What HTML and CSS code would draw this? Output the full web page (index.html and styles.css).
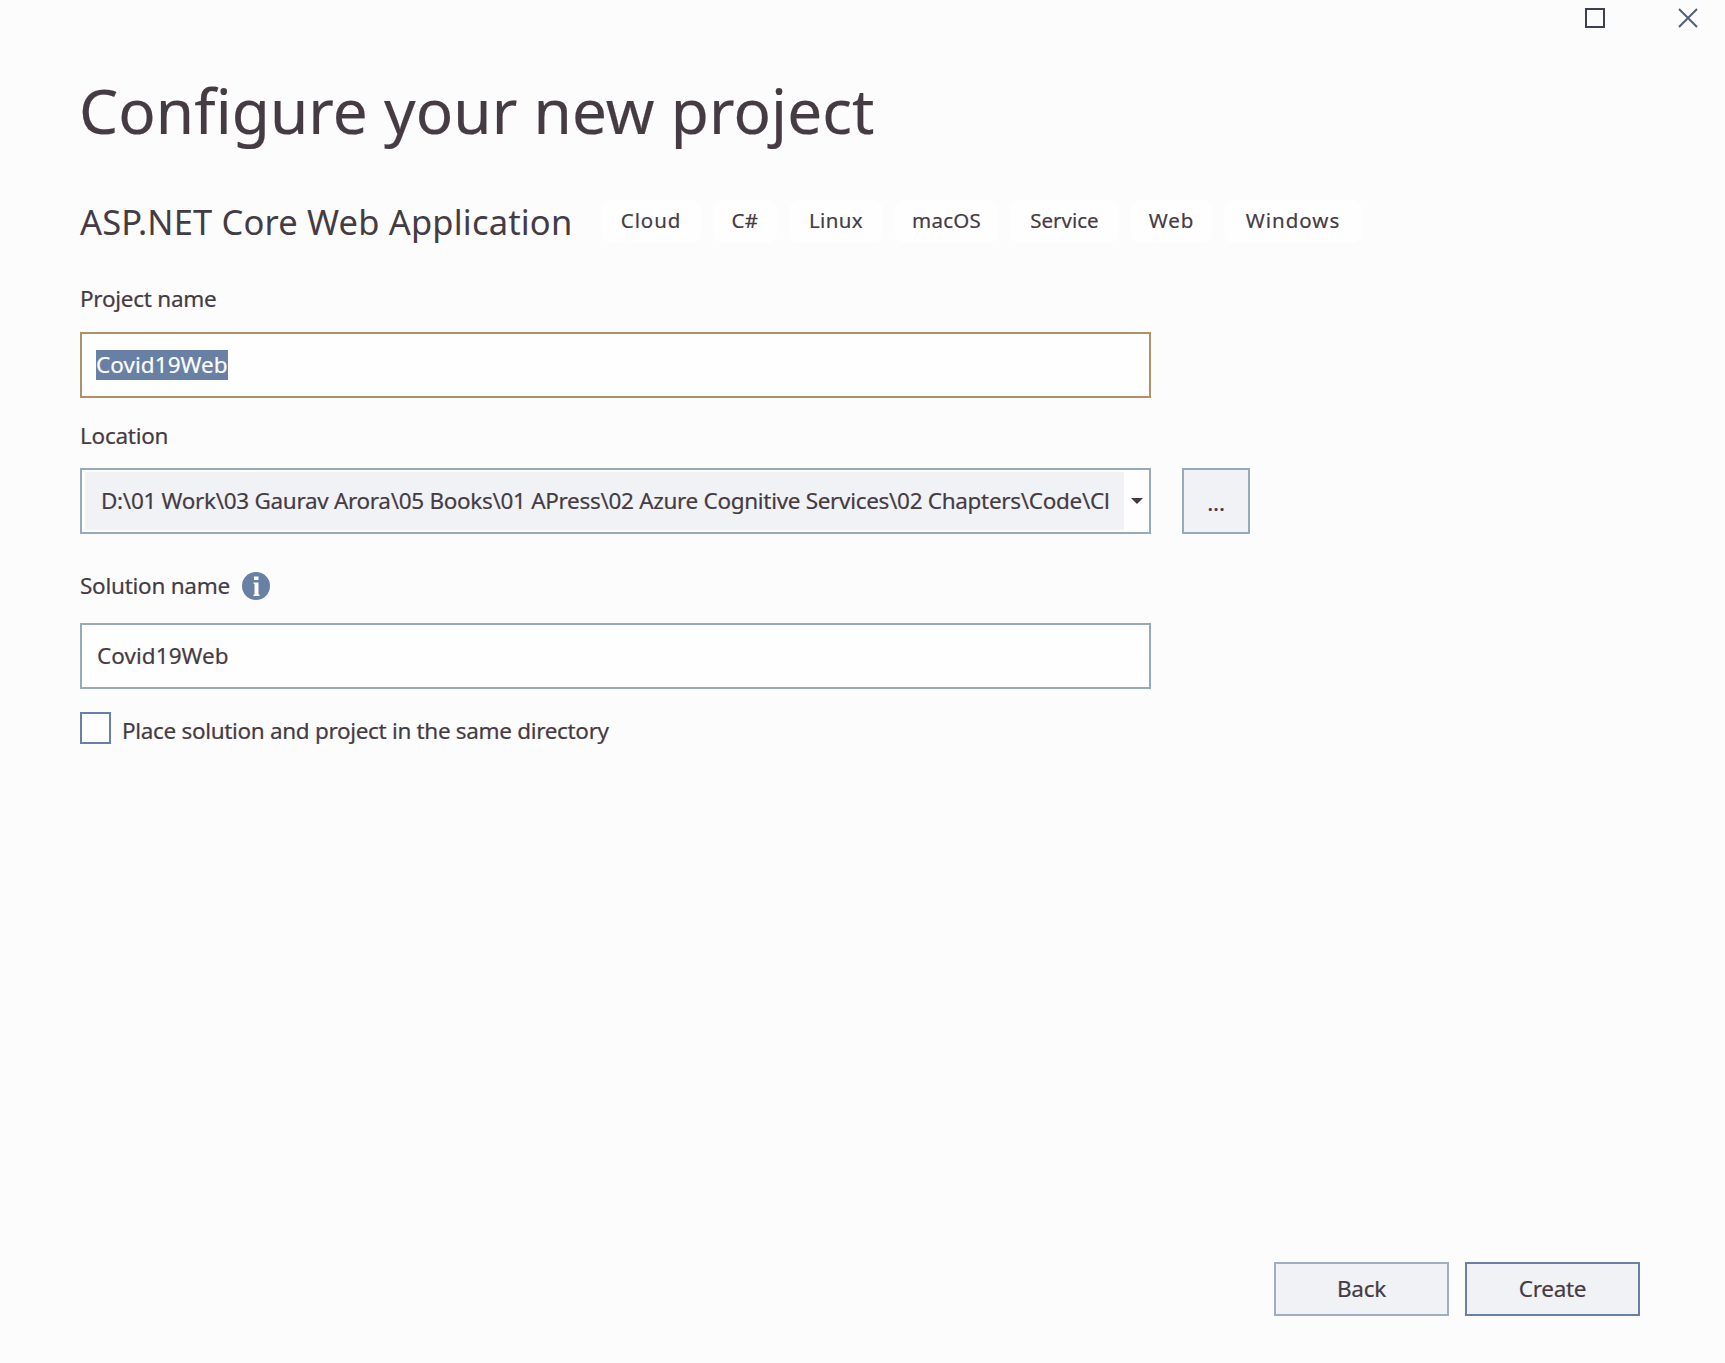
FILE: index.html
```
<!DOCTYPE html>
<html lang="en">
<head>
<meta charset="utf-8">
<title>Configure your new project</title>
<link rel="stylesheet" href="styles.css">
</head>
<body>
<div class="window">
  <header class="titlebar">
    <svg class="win-icon" width="22" height="22" viewBox="0 0 22 22"><rect x="2" y="2" width="18" height="18" fill="none" stroke="#3d4050" stroke-width="2"/></svg>
    <svg class="win-icon" width="22" height="22" viewBox="0 0 22 22"><path d="M2 2 20 20M20 2 2 20" fill="none" stroke="#4f5f7d" stroke-width="2"/></svg>
  </header>
  <main class="content">
    <h1 class="title">Configure your new project</h1>
    <div class="template">
      <h2 class="template-name">ASP.NET Core Web Application</h2>
      <ul class="tags">
        <li class="tag tag-cloud">Cloud</li>
        <li class="tag tag-csharp">C#</li>
        <li class="tag tag-linux">Linux</li>
        <li class="tag tag-macos">macOS</li>
        <li class="tag tag-service">Service</li>
        <li class="tag tag-web">Web</li>
        <li class="tag tag-windows">Windows</li>
      </ul>
    </div>
    <div class="label label-project">Project name</div>
    <div class="field field-focus"><span class="value selection">Covid19Web</span></div>
    <div class="label label-location">Location</div>
    <div class="location-row">
      <div class="field combo">
        <div class="combo-value">D:\01 Work\03 Gaurav Arora\05 Books\01 APress\02 Azure Cognitive Services\02 Chapters\Code\Cl</div>
        <svg class="combo-arrow" width="12" height="6" viewBox="0 0 12 6"><path d="M0 0H12L6 6Z" fill="#43393f"/></svg>
      </div>
      <div class="browse">...</div>
    </div>
    <div class="label label-solution">Solution name
      <svg class="info" width="28" height="28" viewBox="0 0 28 28"><circle cx="14" cy="14" r="14" fill="#6880a3"/><path d="M12 4.500h4.500v3.500h-4.500zM11.500 10.500h5V22.500h1V24H11.500V22.500H12.500V12H11.500z" fill="#fdfdfd"/></svg>
    </div>
    <div class="field"><span class="value">Covid19Web</span></div>
    <div class="check-row"><div class="checkbox"></div><span class="check-label">Place solution and project in the same directory</span></div>
  </main>
  <footer class="actions">
    <div class="button">Back</div>
    <div class="button button-primary">Create</div>
  </footer>
</div>
</body>
</html>
```
FILE: styles.css
```
* { box-sizing: border-box; }
body {
  margin: 0;
  background: #fcfcfc;
  color: #453b43;
  font-family: "Noto Sans", "Open Sans", sans-serif;
  font-size: 22.5px;
  letter-spacing: -0.26px;
  -webkit-text-stroke: 0.2px;
}
.window { width: 1725px; height: 1363px; display: flex; flex-direction: column; }
.titlebar { height: 67px; padding: 7px 26px 0 0; display: flex; justify-content: flex-end; gap: 71px; }
.content { flex: 1; padding-left: 80px; display: flex; flex-direction: column; }
.title { margin: 0 0 0 -1px; font-size: 62px; font-weight: 400; line-height: 86px; letter-spacing: 0.08px; white-space: nowrap; }
.template { margin-top: 47px; height: 43px; display: flex; align-items: center; }
.template-name { margin: 0; width: 521px; font-size: 34.5px; font-weight: 400; line-height: 42px; letter-spacing: 0.17px; white-space: nowrap; -webkit-text-stroke: 0; }
.tags { display: flex; gap: 12px; margin: 0; padding: 0; list-style: none; }
.tag { height: 43px; border-radius: 10px; background: #fefefe; font-size: 20.5px; line-height: 40px; letter-spacing: 0.3px; text-align: center; white-space: nowrap; }
.tag-cloud { width: 100px; letter-spacing: 0.9px; }
.tag-csharp { width: 64px; }
.tag-linux { width: 94px; letter-spacing: 0.4px; }
.tag-macos { width: 103px; letter-spacing: 0.2px; }
.tag-service { width: 109px; letter-spacing: 0; }
.tag-web { width: 81px; letter-spacing: 0.9px; }
.tag-windows { width: 138px; letter-spacing: 1px; }
.label { height: 30px; line-height: 30px; display: flex; align-items: center; }
.label-project { margin: 41px 0 18px; }
.label-location { margin: 23px 0 17px; }
.label-solution { margin: 37px 0 22px; }
.info { margin: 0 0 0 12px; }
.field { width: 1071px; height: 66px; padding: 0 0 1px 15px; border: 2px solid #9aa8bb; background: #fefefe; display: flex; align-items: center; }
.field-focus { padding-left: 14px; border-color: #b09068; }
.value { letter-spacing: 0.05px; line-height: 30px; }
.selection { background: #6880a3; color: #fdfdfd; }
.location-row { display: flex; gap: 31px; }
.combo { padding: 2px 6px 2px 3px; justify-content: space-between; }
.combo-value { width: 1039px; height: 58px; padding-left: 16px; background: #f0f2f6; line-height: 58px; letter-spacing: -0.31px; white-space: nowrap; }
.browse { width: 68px; height: 66px; border: 2px solid #9aa8bb; background: #f0f2f6; text-align: center; line-height: 66px; }
.check-row { margin-top: 23px; display: flex; gap: 11px; }
.checkbox { width: 31px; height: 32px; border: 2px solid #6880a3; background: #fefefe; }
.check-label { line-height: 38px; letter-spacing: -0.32px; white-space: nowrap; }
.actions { height: 101px; padding-right: 85px; display: flex; justify-content: flex-end; gap: 16px; }
.button { width: 175px; height: 54px; border: 2px solid #a0aec0; background: #f0f2f6; text-align: center; line-height: 49px; }
.button-primary { border-color: #6880a3; }
```
